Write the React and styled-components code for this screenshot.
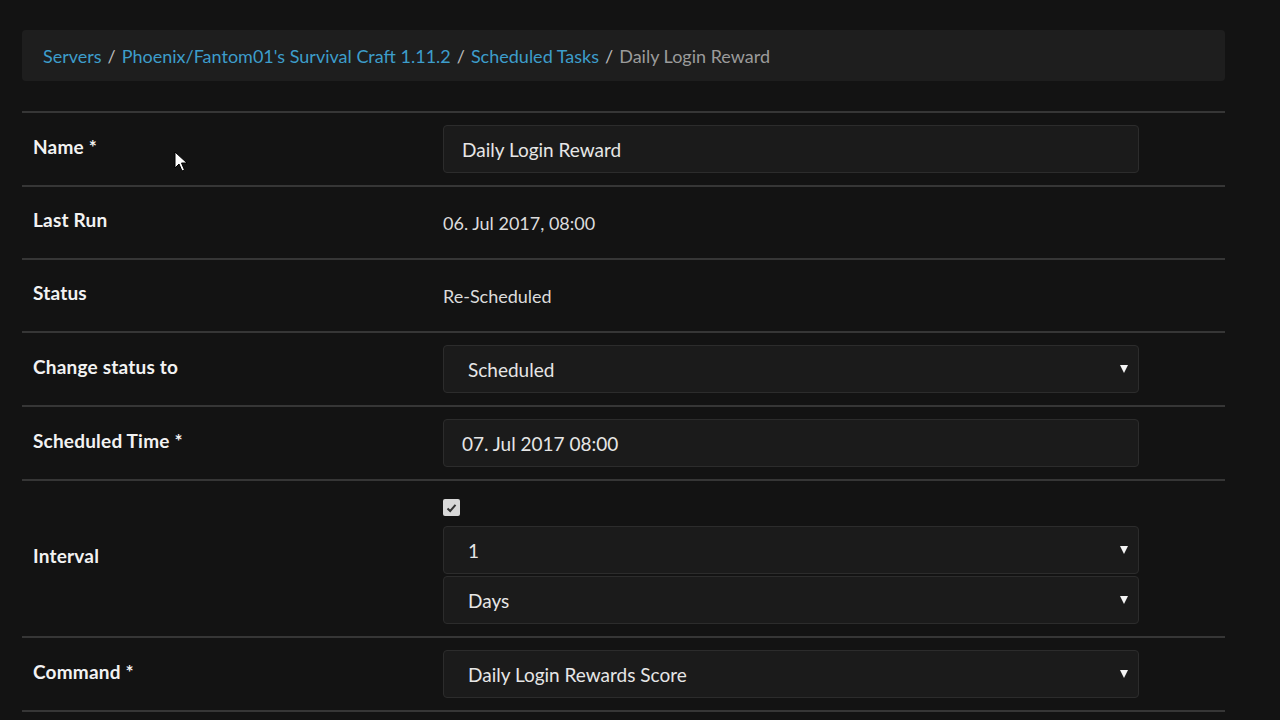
import React from "react";
import styled, { createGlobalStyle } from "styled-components";

const Global = createGlobalStyle`
  html, body { margin: 0; padding: 0; background: #131313; }
  body { font-family: Lato, "Noto Sans", sans-serif; color: #ddd; }
  * { box-sizing: border-box; }
`;

const Page = styled.div`
  position: relative;
  width: 1280px;
  height: 720px;
  overflow: hidden;
  padding: 30px 55px 0 22px;
`;

const Crumbs = styled.nav`
  display: flex;
  align-items: center;
  height: 51px;
  background: #1e1e1e;
  border-radius: 4px;
  padding: 0 21px;
  font-size: 18px;
  margin-bottom: 30px;
`;

const Crumb = styled.a`
  color: ${(p) => (p.$active ? "#9b9b9b" : "#3d9dcb")};
  text-decoration: none;
`;

const Sep = styled.span`
  color: #bbb;
  padding: 0 6px;
`;

const Table = styled.div`
  border-top: 2px solid #363636;
`;

const Row = styled.div`
  display: grid;
  grid-template-columns: 411px 1fr;
  align-items: center;
  border-bottom: 2px solid #363636;
  min-height: ${(p) => p.$h || 73}px;
`;

const Label = styled.div`
  padding: 0 11px 6px;
  font-weight: 700;
  font-size: 19px;
  letter-spacing: 0.2px;
  color: #f2f2f2;
`;

const Cell = styled.div`
  padding: 12px 86px 12px 10px;
  display: flex;
  flex-direction: column;
  gap: 2px;
`;

const Value = styled.div`
  font-size: 18px;
  color: #dcdcdc;
`;

const Input = styled.div`
  height: 48px;
  display: flex;
  align-items: center;
  background: #1b1b1b;
  border: 1px solid #2c2c2c;
  border-radius: 4px;
  padding: 0 18px;
  font-size: 19px;
  color: #e6e6e6;
`;

const Select = styled(Input)`
  padding: 0 10px 0 24px;
  justify-content: space-between;
`;

const Arrow = styled.span`
  width: 0;
  height: 0;
  border-left: 4.5px solid transparent;
  border-right: 4.5px solid transparent;
  border-top: 8px solid #f4f4f4;
`;

const Check = styled.div`
  width: 17px;
  height: 17px;
  border-radius: 2px;
  background: #d8d8d8;
  display: flex;
  align-items: center;
  justify-content: center;
  margin: 6px 0 8px 0;
`;

const Cursor = styled.svg`
  position: absolute;
  left: 174px;
  top: 151px;
`;

const SelectBox = ({ children }) => (
  <Select>
    <span>{children}</span>
    <Arrow />
  </Select>
);

export default function App() {
  return (
    <Page>
      <Global />
      <Crumbs>
        <Crumb href="#">Servers</Crumb>
        <Sep>/</Sep>
        <Crumb href="#">Phoenix/Fantom01's Survival Craft 1.11.2</Crumb>
        <Sep>/</Sep>
        <Crumb href="#">Scheduled Tasks</Crumb>
        <Sep>/</Sep>
        <Crumb $active>Daily Login Reward</Crumb>
      </Crumbs>
      <Table>
        <Row>
          <Label>Name *</Label>
          <Cell>
            <Input>Daily Login Reward</Input>
          </Cell>
        </Row>
        <Row>
          <Label>Last Run</Label>
          <Cell>
            <Value>06. Jul 2017, 08:00</Value>
          </Cell>
        </Row>
        <Row>
          <Label>Status</Label>
          <Cell>
            <Value>Re-Scheduled</Value>
          </Cell>
        </Row>
        <Row>
          <Label>Change status to</Label>
          <Cell>
            <SelectBox>Scheduled</SelectBox>
          </Cell>
        </Row>
        <Row>
          <Label>Scheduled Time *</Label>
          <Cell>
            <Input>07. Jul 2017 08:00</Input>
          </Cell>
        </Row>
        <Row $h={155}>
          <Label>Interval</Label>
          <Cell>
            <Check>
              <svg width="11" height="10" viewBox="0 0 11 10">
                <path d="M1.5 5.5 L4.2 8 L9.5 1.8" stroke="#333" strokeWidth="2" fill="none" />
              </svg>
            </Check>
            <SelectBox>1</SelectBox>
            <SelectBox>Days</SelectBox>
          </Cell>
        </Row>
        <Row>
          <Label>Command *</Label>
          <Cell>
            <SelectBox>Daily Login Rewards Score</SelectBox>
          </Cell>
        </Row>
      </Table>
      <Cursor width="14" height="22" viewBox="0 0 14 22">
        <path d="M1 1 L1 17 L5 13 L8 20 L10.5 19 L7.5 12 L13 12 Z" fill="#fff" stroke="#000" strokeWidth="1" />
      </Cursor>
    </Page>
  );
}
